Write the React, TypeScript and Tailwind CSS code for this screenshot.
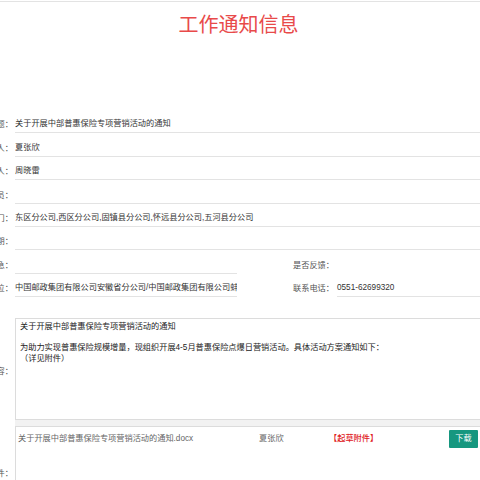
import React from "react";

const F = { fontFamily: '"Liberation Sans", "Noto Sans CJK SC", sans-serif' };

function Row({ label, value }: { label: string; value?: string }) {
  return (
    <div className="flex h-[23.4px]">
      <div className="w-[80px] shrink-0 flex items-end justify-end pb-[3px] leading-[10px] text-[#555]">{label}</div>
      <div className="ml-[2px] flex-1 flex items-end pb-[3px] leading-[10px] border-b border-[#e3e3e3] text-[#333] whitespace-nowrap overflow-hidden">
        {value}
      </div>
    </div>
  );
}

function SplitRow({ label, value, label2, value2 }: { label: string; value?: string; label2: string; value2?: string }) {
  return (
    <div className="flex h-[23.4px]">
      <div className="w-[80px] shrink-0 flex items-end justify-end pb-[3px] leading-[10px] text-[#555]">{label}</div>
      <div className="ml-[2px] w-[222px] shrink-0 flex items-end pb-[3px] leading-[10px] border-b border-[#e3e3e3] text-[#333] whitespace-nowrap overflow-hidden">
        {value}
      </div>
      <div className="ml-[56px] w-[41px] shrink-0 flex items-end pb-[3px] leading-[10px] text-[#555] whitespace-nowrap">{label2}</div>
      <div
        className={
          "ml-[3px] flex-1 flex items-end pb-[3px] leading-[10px] text-[#333] whitespace-nowrap " +
          (value2 ? "border-b border-[#e3e3e3]" : "")
        }
      >
        {value2}
      </div>
    </div>
  );
}

export default function App() {
  return (
    <div className="w-[480px] h-[480px] overflow-hidden bg-white" style={F}>
      <div className="h-px mt-px bg-[#e3e3e3]" />
      <h1 className="mt-[11px] text-center pr-[3px] text-[20px] leading-[24px] text-[#e84a4a] font-normal">工作通知信息</h1>
      <div className="mt-[73px] ml-[-67px] w-[620px] text-[8.2px]">
        <Row label="标题：" value="关于开展中部普惠保险专项营销活动的通知" />
        <Row label="发布人：" value="夏张欣" />
        <Row label="审核人：" value="周晓雷" />
        <Row label="抄送人员：" />
        <Row label="接收部门：" value="东区分公司,西区分公司,固镇县分公司,怀远县分公司,五河县分公司" />
        <Row label="截止日期：" />
        <SplitRow label="是否紧急：" label2="是否反馈：" />
        <SplitRow
          label="发布单位："
          value="中国邮政集团有限公司安徽省分公司/中国邮政集团有限公司蚌埠市分公司"
          label2="联系电话："
          value2="0551-62699320"
        />
        <div className="mt-[21px] flex">
          <div className="w-[80px] shrink-0 flex items-center justify-end text-[#555]">内容：</div>
          <div className="ml-[2px] flex-1 flex flex-col">
            <div className="h-[102px] border border-[#dcdcdc] pl-[4px] pt-[3px] leading-[10.5px] text-[#222]">
              <div>关于开展中部普惠保险专项营销活动的通知</div>
              <div className="h-[10.5px]" />
              <div>为助力实现普惠保险规模增量，现组织开展4-5月普惠保险点爆日营销活动。具体活动方案通知如下：</div>
              <div>（详见附件）</div>
            </div>
            <div className="h-[6px] bg-[#f2f2f2]" />
          </div>
        </div>
        <div className="flex">
          <div className="w-[80px] shrink-0 flex items-center justify-end text-[#555]">附件：</div>
          <div className="ml-[2px] flex-1 h-[96px] border border-[#dcdcdc] pt-[3px] pl-[2px]">
            <div className="flex items-center h-[18px] text-[#666]">
              <div className="w-[241px] shrink-0 whitespace-nowrap">关于开展中部普惠保险专项营销活动的通知.docx</div>
              <div className="w-[70px] shrink-0">夏张欣</div>
              <div className="w-[120px] shrink-0 text-[#e0201c] font-medium">【起草附件】</div>
              <div className="w-[29px] h-[18px] shrink-0 bg-[#16977f] text-white rounded-[1px] flex items-center justify-center text-[8.2px]">
                下载
              </div>
            </div>
          </div>
        </div>
      </div>
    </div>
  );
}
